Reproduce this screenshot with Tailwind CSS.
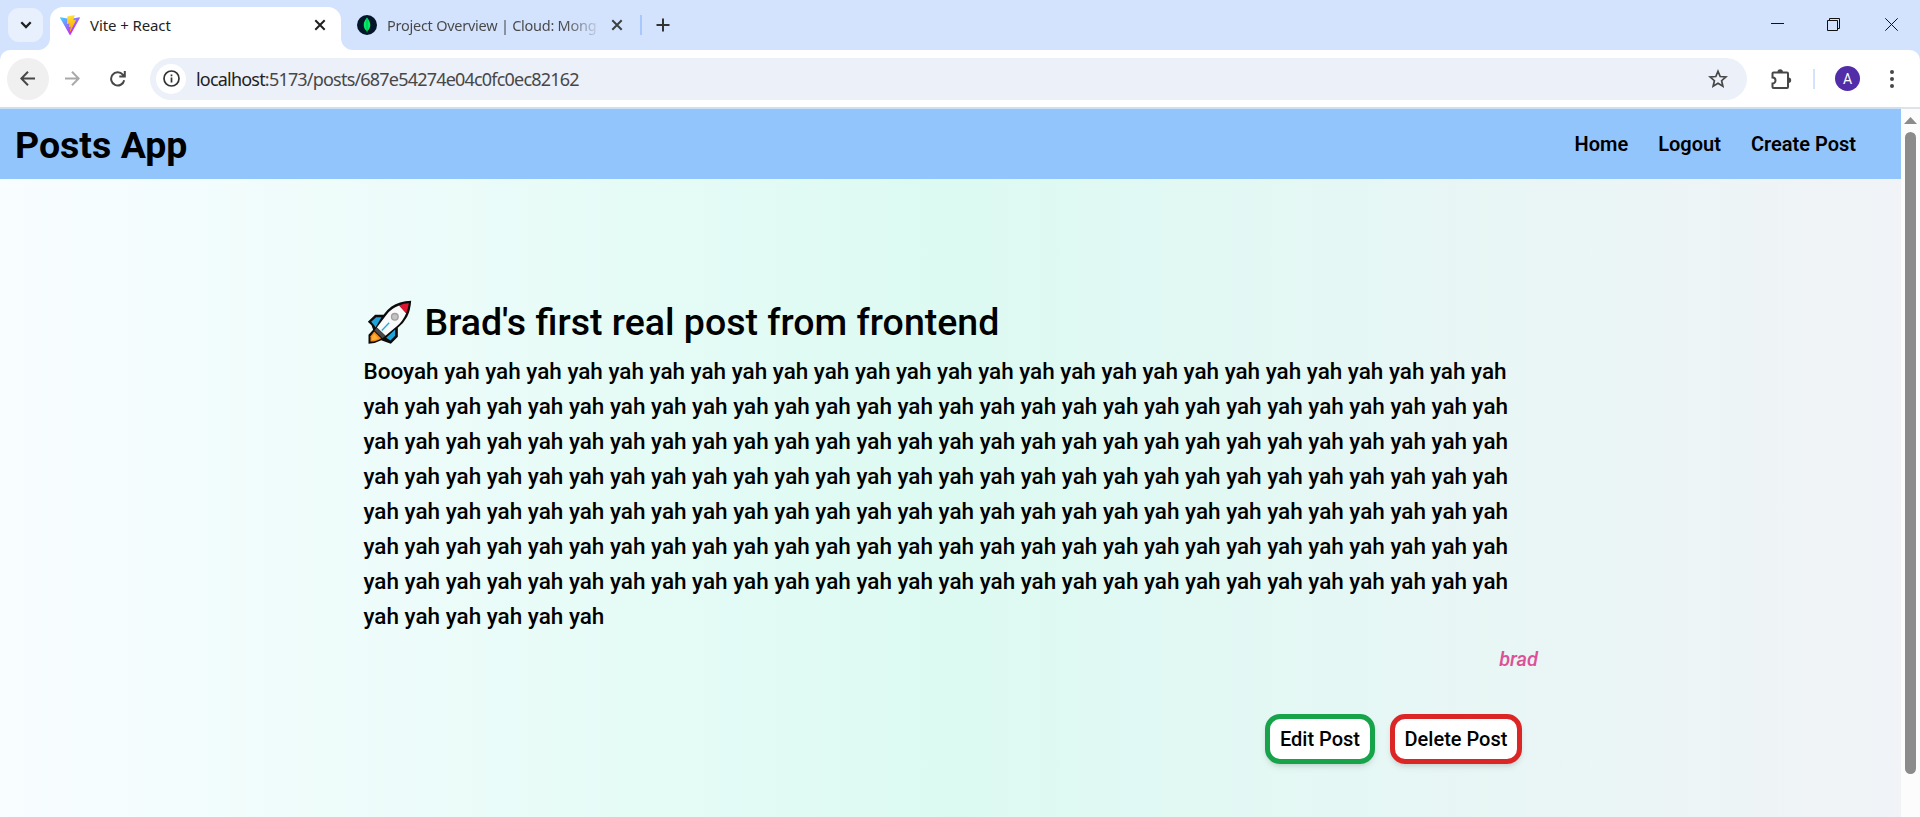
<!DOCTYPE html>
<html lang="en">
<head>
<meta charset="utf-8">
<title>Vite + React</title>
<script src="https://cdn.jsdelivr.net/npm/@tailwindcss/browser@4"></script>
</head>
<body class="h-[817px] w-[1920px] overflow-hidden flex flex-col font-['Roboto',sans-serif] text-black">
<!-- Tab strip -->
<div class="h-[50px] shrink-0 bg-[#d3e2fd] flex items-end pl-2 pr-3.5 font-['Noto_Sans',sans-serif] relative">
  <button class="w-[35px] h-[34px] mb-2 rounded-[11px] bg-[#e9f0fd] grid place-items-center">
    <svg class="w-[12px] h-[8px]" viewBox="0 0 12 8" fill="none" stroke="#1f1f1f" stroke-width="2.3"><path d="M1.3 1.3 6 6l4.700-4.700"/></svg>
  </button>
  <div class="w-[7px]"></div>
  <div class="relative w-[291px] h-[43px] bg-white rounded-t-[13px] flex items-center pl-[10px] pr-[15px] pb-[7px] pt-0">
    <svg class="absolute bottom-0 -left-3 size-3" viewBox="0 0 12 12"><path d="M12 0v12H0A12 12 0 0 0 12 0" fill="#fff"/></svg>
    <svg class="absolute bottom-0 -right-3 size-3" viewBox="0 0 12 12"><path d="M0 0v12h12A12 12 0 0 1 0 0" fill="#fff"/></svg>
    <svg class="w-5 h-5 shrink-0" viewBox="0 0 256 257"><defs><linearGradient id="a" x1="-.8%" x2="57.600%" y1="7.600%" y2="78.400%"><stop offset="0" stop-color="#41D1FF"/><stop offset="1" stop-color="#BD34FE"/></linearGradient><linearGradient id="b" x1="43.400%" x2="50.300%" y1="2.200%" y2="89%"><stop offset="0" stop-color="#FFEA83"/><stop offset=".083" stop-color="#FFDD35"/><stop offset="1" stop-color="#FFA800"/></linearGradient></defs><path fill="url(#a)" d="M255.153 37.938 134.897 252.976c-2.483 4.440-8.862 4.466-11.382.048L.875 37.958c-2.746-4.814 1.371-10.646 6.827-9.670l120.385 21.517a6.537 6.537 0 0 0 2.322-.004l117.867-21.483c5.438-.991 9.574 4.796 6.877 9.620Z"/><path fill="url(#b)" d="M185.432.063 96.440 17.501a3.268 3.268 0 0 0-2.634 3.014l-5.474 92.456a3.268 3.268 0 0 0 3.997 3.378l24.777-5.718c2.318-.535 4.413 1.507 3.936 3.838l-7.361 36.047c-.495 2.426 1.782 4.500 4.151 3.780l15.304-4.649c2.372-.720 4.652 1.360 4.150 3.788l-11.698 56.621c-.732 3.542 3.979 5.473 5.943 2.437l1.313-2.028 72.516-144.720c1.215-2.423-.880-5.186-3.540-4.672l-25.505 4.922c-2.396.462-4.435-1.770-3.759-4.114l16.646-57.705c.677-2.350-1.370-4.583-3.769-4.113Z"/></svg>
    <span class="ml-[10px] text-[15px] leading-5 text-[#1f1f1f] tracking-[-0.1px] whitespace-nowrap">Vite + React</span>
    <svg class="ml-auto size-[12px]" viewBox="0 0 12 12" stroke="#1f1f1f" stroke-width="2"><path d="m1.300 1.300 9.400 9.400m0-9.400-9.400 9.400"/></svg>
  </div>
  <div class="flex items-center h-[43px] pb-[7px] pl-[16px]">
    <svg class="size-5" viewBox="0 0 20 20"><circle cx="10" cy="10" r="10" fill="#04162a"/><path d="M10 2.500c-1.800 2.600-3.400 4.400-3.300 7.700.1 2.600 1.400 4.700 3.100 5.800v1.500h.5V16c1.700-1.200 2.900-3.200 3-5.700.1-3.300-1.500-5.200-3.300-7.800" fill="#00ed64"/><path d="M10 4v12.500" stroke="#00984a" stroke-width=".6"/></svg>
    <span class="ml-[10px] w-[209px] text-[14.500px] leading-5 tracking-[-0.25px] whitespace-nowrap bg-linear-to-r from-[#474747] from-85% to-[#474747]/15 bg-clip-text text-transparent">Project Overview | Cloud: Mong</span>
    <svg class="ml-[15px] size-[12px]" viewBox="0 0 12 12" stroke="#3c4043" stroke-width="2"><path d="m1.300 1.300 9.400 9.400m0-9.400-9.400 9.400"/></svg>
    <div class="ml-[17px] w-[2px] h-5 bg-[#a8c7fa]"></div>
    <svg class="ml-[14px] size-[14px]" viewBox="0 0 14 14" stroke="#333" stroke-width="2"><path d="M7 .5v13M.5 7h13"/></svg>
  </div>
  <div class="ml-auto h-[50px] flex items-center pr-[8px] pb-[2px]">
    <svg class="w-[13px] h-[13px]" viewBox="0 0 13 13"><path d="M0 5.500h13" stroke="#111"/></svg>
    <svg class="ml-[43px] size-[13px]" viewBox="0 0 13 13" fill="none" stroke="#111"><path d="M.5 2.500h10v10H.5zM2.500 2V.5h10v10H11"/></svg>
    <svg class="ml-[45px] size-[13px]" viewBox="0 0 13 13" fill="none" stroke="#111"><path d="m.3.300 12.400 12.400M12.700.3.300 12.700"/></svg>
  </div>
</div>
<!-- Toolbar -->
<div class="h-[57px] shrink-0 bg-[#d3e2fd]">
  <div class="h-full bg-white rounded-t-[10px] flex items-center pl-[7px] pr-[26px]">
    <button class="size-[42px] rounded-full bg-[#f0f0f0] grid place-items-center">
      <svg class="size-[15px] -ml-px" viewBox="0 0 15 15" fill="none" stroke="#474747" stroke-width="2"><path d="M15 7.500H1.500M8 .8 1.300 7.500 8 14.200"/></svg>
    </button>
    <svg class="ml-[16px] size-[15px]" viewBox="0 0 15 15" fill="none" stroke="#a9a9a9" stroke-width="2"><path d="M0 7.500h13.500M7 .8l6.700 6.700L7 14.200"/></svg>
    <svg class="ml-[30px] size-[16px]" viewBox="0 0 16 16" fill="none" stroke="#474747" stroke-width="2"><path d="M14.200 9.200A6.600 6.600 0 1 1 12.800 3.600L14 5M14.800 0v5.500H9.300"/></svg>
    <div class="ml-[24px] w-[1597px] h-[42px] rounded-full bg-[#ebf0f9] flex items-center pl-[6px] pr-[19px]">
      <div class="size-[30px] rounded-full bg-white grid place-items-center">
        <svg class="size-[17px]" viewBox="0 0 17 17" fill="none" stroke="#333" stroke-width="1.700"><circle cx="8.500" cy="8.500" r="7.500"/><path d="M8.500 7.500v5M8.500 4.400v1.800"/></svg>
      </div>
      <span class="ml-[10px] pt-px font-['Noto_Sans',sans-serif] text-[18px] tracking-[-0.800px] text-[#474747] whitespace-nowrap"><span class="text-[#1f1f1f]">localhost</span>:5173/posts/687e54274e04c0fc0ec82162</span>
      <svg class="ml-auto size-[20px]" viewBox="0 0 20 20" fill="none" stroke="#474747" stroke-width="1.700"><path d="m10 2.300 2.200 5.200 5.700.5-4.300 3.700 1.300 5.600-4.900-3-4.900 3 1.300-5.600L2.100 8l5.700-.5z"/></svg>
    </div>
    <svg class="ml-[23px] w-[22px] h-[22px]" viewBox="0 0 22 22"><path d="M3.500 4.500H17q1 0 1 1V19q0 1-1 1H3.500q-1 0-1-1v-3.500a3 3 0 0 0 0-6V5.500q0-1 1-1Z" fill="none" stroke="#474747" stroke-width="2"/><path d="M7.500 4a2.700 2.700 0 0 1 5.400 0zM18.500 9.500a2.700 2.700 0 0 1 0 5.400z" fill="#474747"/></svg>
    <div class="ml-[21px] w-[2px] h-5 bg-[#d3e2fd]"></div>
    <div class="ml-[20px] size-[25px] rounded-full bg-[#512da8] text-white text-[14px] leading-none grid place-items-center">A</div>
    <svg class="ml-auto w-[4px] h-[18px]" viewBox="0 0 4 18" fill="#474747"><circle cx="2" cy="2" r="2"/><circle cx="2" cy="9" r="2"/><circle cx="2" cy="16" r="2"/></svg>
  </div>
</div>
<div class="h-[2px] shrink-0 bg-[#dfe2e6] flex"><div class="w-[1901px] bg-[#cbdff5]"></div></div>
<!-- Page viewport -->
<div class="flex grow min-h-0">
  <div class="w-[1901px] flex flex-col bg-linear-to-r from-[#f8fdff] via-[#dcfaf2] to-[#f1f3f7]">
    <header class="h-[70px] shrink-0 bg-[#93c5fd] flex items-center justify-between pl-[15px] pr-[45px]">
      <h1 class="text-[37.500px] font-bold leading-[45px] pt-[2px]">Posts App</h1>
      <nav class="flex gap-[30px] text-[20px] font-semibold leading-[30px]"><a>Home</a><a>Logout</a><a>Create Post</a></nav>
    </header>
    <main class="pl-[363.500px] w-[1538px] pt-[121px] flex flex-col">
      <div class="flex items-center h-[45px]">
        <svg class="w-[46px] h-[46px] mr-[15px] shrink-0" viewBox="10.500 28.500 138 138" overflow="visible">
          <path d="M152 31Q115 33 93 48 78 59 69 73L44 73 22 94 33 104 38 118 24 133V160Q44 159 62 149L91 160 112 139V112Q130 98 140 79 150 60 152 31Z" fill="#0b0b0b"/>
          <path d="M63 80 47 80 32 94 41 104 45 111ZM104 117V136L90 150 77 142Z" fill="#1fa3d8"/>
          <path d="M116 45Q91 54 77 74L49 111 75 136 108 108Q127 92 137 68Z" fill="#fafafa"/>
          <path d="M145 38Q130 38 116 45L137 68Q143 54 145 38Z" fill="#e01530"/>
          <path d="M49 111 75 136 66 143 42 120Z" fill="#4a4a4a"/>
          <path d="M41 123 62 143Q49 153 30 153V137Z" fill="#f28a1a"/>
          <path d="M41 130 54 143Q45 149 34 149V139Z" fill="#ffad33"/>
          <path d="M64 120 86 97" stroke="#27a8e0" stroke-width="4"/>
          <circle cx="103" cy="79" r="10" fill="#c4c4c4" stroke="#a0a0a0" stroke-width="4"/>
        </svg>
        <h2 class="text-[37.500px] font-medium leading-[45px] whitespace-nowrap">Brad's first real post from frontend</h2>
      </div>
      <p class="mt-[9px] w-[1160px] text-[22.500px] font-medium leading-[35px]">
        Booyah yah yah yah yah yah yah yah yah yah yah yah yah yah yah yah yah yah yah yah yah yah yah yah yah yah yah
        yah yah yah yah yah yah yah yah yah yah yah yah yah yah yah yah yah yah yah yah yah yah yah yah yah yah yah yah
        yah yah yah yah yah yah yah yah yah yah yah yah yah yah yah yah yah yah yah yah yah yah yah yah yah yah yah yah
        yah yah yah yah yah yah yah yah yah yah yah yah yah yah yah yah yah yah yah yah yah yah yah yah yah yah yah yah
        yah yah yah yah yah yah yah yah yah yah yah yah yah yah yah yah yah yah yah yah yah yah yah yah yah yah yah yah
        yah yah yah yah yah yah yah yah yah yah yah yah yah yah yah yah yah yah yah yah yah yah yah yah yah yah yah yah
        yah yah yah yah yah yah yah yah yah yah yah yah yah yah yah yah yah yah yah yah yah yah yah yah yah yah yah yah
        yah yah yah yah yah yah
      </p>
      <p class="mt-[10px] text-right text-[20px] leading-[30px] font-medium italic text-[#db5097]">brad</p>
      <div class="mt-[40px] flex justify-end gap-[15px] pr-[16px] text-[20px] font-medium leading-[30px]">
        <button class="h-[50px] w-[110px] border-5 border-[#16a34a] rounded-[15px] bg-white shadow-md">Edit Post</button>
        <button class="h-[50px] w-[132px] border-5 border-[#dc2626] rounded-[15px] bg-white shadow-md">Delete Post</button>
      </div>
    </main>
  </div>
  <div class="w-[19px] bg-[#fcfcfc] flex flex-col items-center pt-[8px]">
    <svg class="w-[13px] h-[7px]" viewBox="0 0 13 7"><path d="M6.500 0 13 7H0z" fill="#8b8b8b"/></svg>
    <div class="mt-[8px] w-[11px] h-[642px] rounded-full bg-[#8b8b8b]"></div>
  </div>
</div>
</body>
</html>
